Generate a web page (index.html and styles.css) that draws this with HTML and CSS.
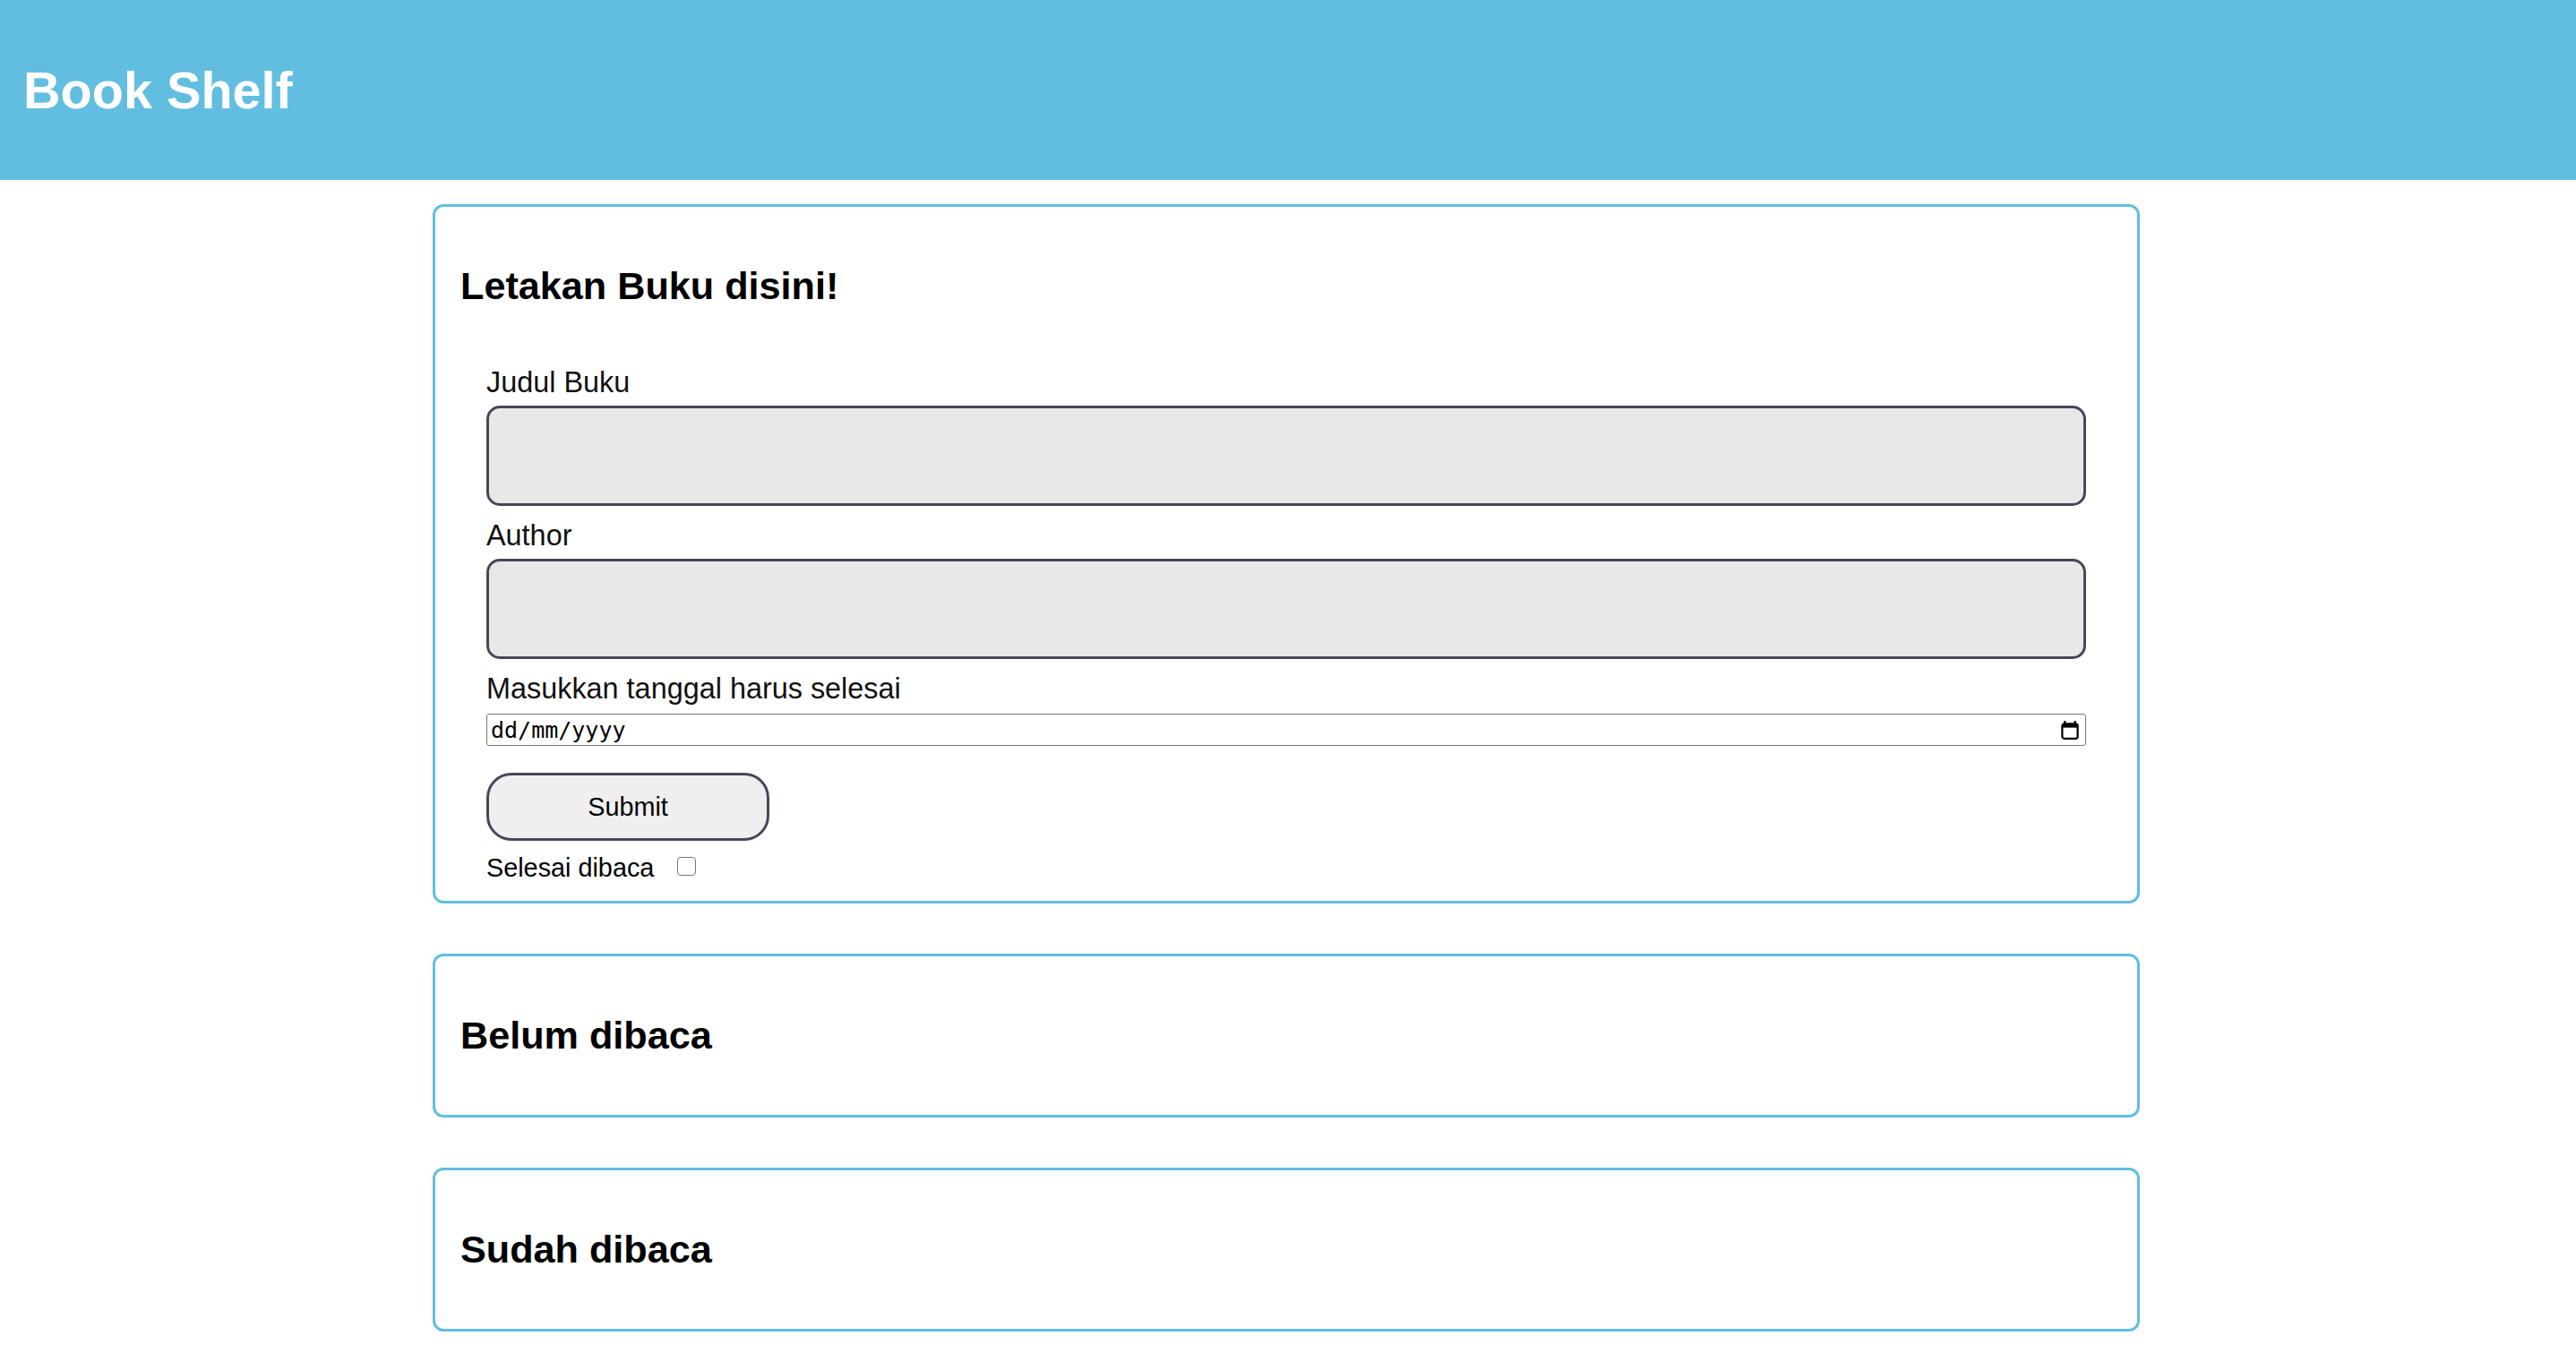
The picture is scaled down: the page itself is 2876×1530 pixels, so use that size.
FILE: index.html
```html
<!DOCTYPE html>
<html lang="id">
<head>
<meta charset="utf-8">
<title>Book Shelf</title>
<link rel="stylesheet" href="styles.css">
</head>
<body>
<header class="app-header">
  <h1 class="app-title">Book Shelf</h1>
</header>
<main class="shelf">
  <section class="card">
    <h2 class="card-title">Letakan Buku disini!</h2>
    <form class="book-form">
      <label class="field-label" for="judul">Judul Buku</label>
      <input class="text-input" id="judul" type="text">
      <label class="field-label" for="author">Author</label>
      <input class="text-input" id="author" type="text">
      <label class="field-label field-label-date" for="tanggal">Masukkan tanggal harus selesai</label>
      <div class="date-field" id="tanggal">
        <span class="date-text">dd/mm/yyyy</span>
        <svg class="date-icon" width="20" height="21" viewBox="0 0 20 21" aria-hidden="true">
          <rect x="3.2" y="0" width="2.2" height="4" fill="#000"/>
          <rect x="14.6" y="0" width="2.2" height="4" fill="#000"/>
          <rect x="1.4" y="3.4" width="17.2" height="16.4" rx="2.4" fill="none" stroke="#000" stroke-width="2.2"/>
          <rect x="1.4" y="3.4" width="17.2" height="4.2" fill="#000"/>
        </svg>
      </div>
      <button class="submit-btn" type="button">Submit</button>
      <div class="check-row">
        <span class="check-label">Selesai dibaca</span>
        <input class="check-box" type="checkbox">
      </div>
    </form>
  </section>
  <section class="card">
    <h2 class="card-title">Belum dibaca</h2>
  </section>
  <section class="card">
    <h2 class="card-title">Sudah dibaca</h2>
  </section>
</main>
</body>
</html>
```
FILE: styles.css
```css
* {
  box-sizing: border-box;
}

html, body {
  margin: 0;
  padding: 0;
  background: #ffffff;
}

body {
  font-family: "Liberation Sans", Arial, Helvetica, sans-serif;
  color: #000;
}

.app-header {
  height: 201px;
  background: #62bee0;
  display: flex;
  align-items: center;
  padding-left: 26px;
}

.app-title {
  margin: 0;
  font-size: 57.6px;
  font-weight: 700;
  color: #ffffff;
  line-height: normal;
}

.shelf {
  padding-top: 27px;
  display: flex;
  flex-direction: column;
  gap: 56px;
}

.card {
  width: 1906px;
  margin-left: 483px;
  border: 3px solid #62bee0;
  border-radius: 12px;
  padding: 0 28px;
}

.card-title {
  margin: 64px 0;
  font-size: 43.2px;
  font-weight: 700;
  line-height: 49px;
}

.card:first-child .card-title {
  margin-bottom: 0;
}

.book-form {
  display: flex;
  flex-direction: column;
  align-items: flex-start;
  padding: 65px 29px 20px;
}

.field-label {
  font-size: 32.4px;
  line-height: 37px;
  color: #111;
}

.text-input {
  display: block;
  width: 100%;
  height: 112px;
  margin: 7px 0 15px;
  border: 3px solid #48465a;
  border-radius: 15px;
  background: #e8e8e8;
  font: inherit;
  outline: none;
}

.date-field {
  width: 100%;
  height: 36px;
  margin-top: 9px;
  border: 1px solid #767676;
  border-radius: 3px;
  background: #fff;
  display: flex;
  align-items: center;
  justify-content: space-between;
  padding: 0 7px 0 4px;
}

.date-text {
  font-family: "DejaVu Sans Mono", "Liberation Mono", monospace;
  font-size: 25px;
  color: #000;
}

.date-icon {
  display: block;
}

.submit-btn {
  margin-top: 30px;
  width: 316px;
  height: 76px;
  border: 3px solid #48465a;
  border-radius: 28px;
  background: #efefef;
  font-family: "Liberation Sans", Arial, sans-serif;
  font-size: 28.8px;
  color: #000;
  padding: 0;
  display: flex;
  align-items: center;
  justify-content: center;
}

.check-row {
  margin-top: 14px;
  display: flex;
  align-items: center;
  font-size: 28.8px;
  line-height: 33px;
}

.check-box {
  appearance: none;
  -webkit-appearance: none;
  width: 21px;
  height: 21px;
  margin: 0 0 4px 26px;
  border: 1.5px solid #767676;
  border-radius: 4px;
  background: #fff;
}
```
